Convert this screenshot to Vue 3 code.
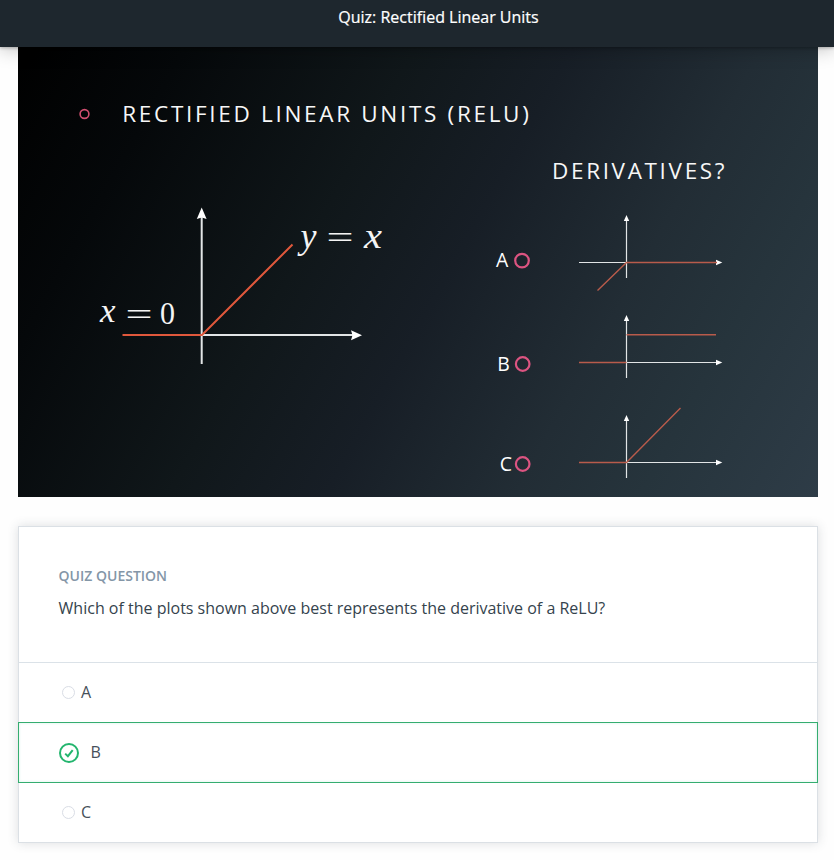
<script setup>
import { ref } from 'vue'

const selected = ref('B')
const options = ['A', 'B', 'C']

const plots = [
  { label: 'A', labelX: 478, labelY: 220.2, ringX: 504, ringY: 213.6, axisY: 215.5, curve: 'M579.5 243.5 608.5 215.5H699', axisFrom: 561 },
  { label: 'B', labelX: 479.3, labelY: 324, ringX: 504.7, ringY: 317, axisY: 315.5, curve: 'M561 315.5H608.5M608.5 287.7H698', axisFrom: 608 },
  { label: 'C', labelX: 481.7, labelY: 424, ringX: 504.7, ringY: 417, axisY: 415.5, curve: 'M561 415.5H608.5L662.5 361', axisFrom: 608 },
]
</script>

<template>
  <div class="page">
    <header class="bar">
      <h1 class="bar-title">Quiz: Rectified Linear Units</h1>
    </header>

    <main class="content">
      <svg class="slide" viewBox="0 0 800 450" width="800" height="450">
        <circle class="ring small" cx="66.5" cy="67" r="4.4" />
        <text class="heading" x="104.300" y="74.700" textLength="406.500" lengthAdjust="spacing">RECTIFIED LINEAR UNITS (RELU)</text>
        <text class="heading" x="534" y="132" textLength="172.500" lengthAdjust="spacing">DERIVATIVES?</text>

        <g class="axis main">
          <path d="M183.7 170V317M184 288H335" />
          <path class="tip" d="M183.7 160.5 188.6 172 183.7 170.5 178.8 172Z" />
          <path class="tip" d="M344 288.2 333 283.2 334.5 288.2 333 293.2Z" />
        </g>
        <path class="curve bold" d="M104.500 288H184L274.500 197.500" />

        <g class="math">
          <text x="82" y="275.200" font-size="33" class="italic" textLength="15.500" lengthAdjust="spacingAndGlyphs">x</text>
          <text x="107.500" y="277.500" font-size="32" textLength="27" lengthAdjust="spacingAndGlyphs">=</text>
          <text x="142" y="276.500" font-size="31" textLength="15" lengthAdjust="spacingAndGlyphs">0</text>
          <text x="282.500" y="200.800" font-size="35" class="italic" textLength="16" lengthAdjust="spacingAndGlyphs">y</text>
          <text x="308.500" y="201.200" font-size="32" textLength="27" lengthAdjust="spacingAndGlyphs">=</text>
          <text x="346" y="201" font-size="36" class="italic" textLength="18" lengthAdjust="spacingAndGlyphs">x</text>
        </g>

        <g v-for="plot in plots" :key="plot.label">
          <text class="label" :x="plot.labelX" :y="plot.labelY">{{ plot.label }}</text>
          <circle class="ring" :cx="plot.ringX" :cy="plot.ringY" r="6.800" />
          <g class="axis">
            <path :d="`M608.5 ${plot.axisY - 42}V${plot.axisY + 15.5}M${plot.axisFrom} ${plot.axisY}H699`" />
            <path class="tip" :d="`M608.5 ${plot.axisY - 47.5}l2.700 6h-5.400Z`" />
            <path class="tip" :d="`M704.3 ${plot.axisY}l-6.300 -2.800v5.600Z`" />
          </g>
          <path class="curve" :d="plot.curve" />
        </g>
      </svg>

      <section class="card">
        <div class="question">
          <h2 class="eyebrow">QUIZ QUESTION</h2>
          <p class="prompt">Which of the plots shown above best represents the derivative of a ReLU?</p>
        </div>
        <div
          v-for="option in options"
          :key="option"
          class="option"
          :class="{ correct: selected === option }"
          @click="selected = option"
        >
          <svg v-if="selected === option" class="check" viewBox="0 0 20 20" width="20" height="20">
            <circle cx="10" cy="10" r="9" />
            <path d="M6.200 10.600 8.900 13.200 13.700 7.200" />
          </svg>
          <span v-else class="radio"></span>
          <span class="option-text">{{ option }}</span>
        </div>
      </section>
    </main>
  </div>
</template>

<style>
body {
  margin: 0;
  background: #fff;
}
</style>

<style scoped>
.page {
  height: 860px;
  overflow: hidden;
  background: #fefefe;
  font-family: "Open Sans", "Noto Sans", sans-serif;
}
.bar {
  position: relative;
  z-index: 1;
  box-sizing: border-box;
  height: 47px;
  padding: 5px 0 0 43px;
  background: #1e272e;
  box-shadow: 0 1px 20px rgba(0, 0, 0, 0.28), 0 1px 3px rgba(0, 0, 0, 0.25);
  text-align: center;
}
.bar-title {
  margin: 0;
  color: #fff;
  font-size: 16px;
  font-weight: 400;
  line-height: 24px;
  -webkit-text-stroke: 0.2px #fff;
}
.content {
  width: 800px;
  margin-left: 18px;
}
.slide {
  display: block;
  background: linear-gradient(119deg, #000 0%, #05080a 16%, #10171a 38%, #171e26 53%, #222d35 71%, #26343c 83%, #2e3c47 100%);
}
.heading {
  fill: #f7f7f7;
  font-size: 22.5px;
}
.label {
  fill: #fff;
  font-size: 19.4px;
}
.ring {
  fill: none;
  stroke: #dc5481;
  stroke-width: 2.2;
}
.ring.small {
  stroke: #d14f70;
  stroke-width: 1.6;
}
.axis {
  fill: none;
  stroke: #e2e5e6;
  stroke-width: 1.2;
}
.axis.main {
  stroke-width: 2;
}
.tip {
  fill: #fff;
  stroke: none;
}
.curve {
  fill: none;
  stroke: #b85b4b;
  stroke-width: 1.4;
}
.curve.bold {
  stroke: #e0583c;
  stroke-width: 2;
}
.math {
  fill: #f4f4f4;
  font-family: "Liberation Serif", serif;
}
.italic {
  font-style: italic;
}
.card {
  box-sizing: border-box;
  height: 317px;
  margin-top: 29px;
  border: 1px solid #dbe0e5;
  background: #fff;
  box-shadow: 0 0 10px rgba(46, 60, 73, 0.17);
}
.question {
  box-sizing: border-box;
  height: 136px;
  padding: 39px 40px 0 39.6px;
  border-bottom: 1px solid #dbe2e8;
}
.eyebrow {
  margin: 0;
  color: #8496a7;
  font-size: 14px;
  font-weight: 600;
  line-height: 20px;
}
.prompt {
  margin: 10px 0 0;
  color: #35434d;
  font-size: 16px;
  line-height: 24px;
}
.option {
  display: flex;
  align-items: center;
  box-sizing: border-box;
  height: 60px;
  padding-left: 43px;
  color: #47505a;
  font-size: 16px;
  line-height: 24px;
}
.option-text {
  padding-bottom: 2px;
}
.radio {
  box-sizing: border-box;
  width: 13px;
  height: 13px;
  margin: 0 6px 2px 0;
  border: 1px solid #d9dde5;
  border-radius: 50%;
}
.option.correct {
  height: 61px;
  margin: -1px -1px 0;
  padding-left: 40px;
  border: 1px solid #35ad70;
  box-shadow: inset 0 0 3px rgba(46, 204, 145, 0.2);
}
.check {
  margin-right: 11.6px;
  fill: none;
  stroke: #23b56e;
  stroke-width: 2;
}
</style>
